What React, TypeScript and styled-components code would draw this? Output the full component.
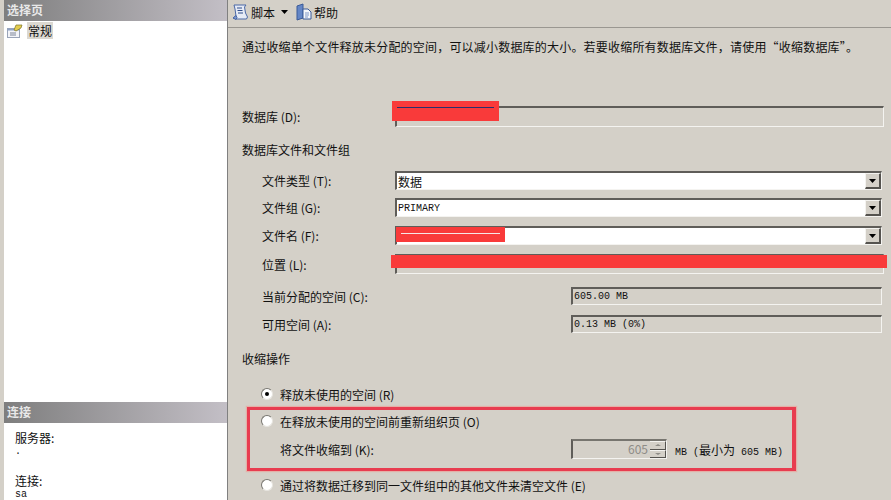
import React from "react";
import styled, { createGlobalStyle } from "styled-components";

const GlobalStyle = createGlobalStyle`
  html, body { margin: 0; padding: 0; background: #d4d0c8; }
  body { width: 891px; height: 500px; overflow: hidden; font-family: "Noto Sans CJK SC", "Liberation Sans", sans-serif; font-size: 12px; color: #111; }
`;

function ScriptIcon() {
  return (
    <svg width="18" height="18" viewBox="0 0 18 18">
      <path d="M3 2h12l-1.500 2 1 6 2 4-1 2H5l-3-1 3-2-1-7z" fill="#e6ebf6" stroke="#4a68a6" />
      <path d="M6 5h5M6.500 7.500h5M7 10h5" stroke="#2f4c8a" />
      <path d="M2 15l3-2.500 1 2-1 2z" fill="#7f9ad0" stroke="#4a68a6" />
    </svg>
  );
}

function HelpIcon() {
  return (
    <svg width="16" height="18" viewBox="0 0 16 18">
      <path d="M1 3l6-2v14l-6 2z" fill="#6486c6" stroke="#3a5a98" />
      <path d="M7 6h5l3 3v7H7z" fill="#f4f6fb" stroke="#3a5a98" />
      <path d="M9 10h4M9 12h4M9 14h3" stroke="#7f97c6" />
    </svg>
  );
}

function PageIcon() {
  return (
    <svg width="16" height="14" viewBox="0 0 16 14">
      <rect x="0.5" y="4.500" width="12" height="9" fill="#f3f4f8" stroke="#9aa4b8" />
      <rect x="0.5" y="4.500" width="12" height="2" fill="#8fa2c4" />
      <path d="M3 9h6M3 11h6" stroke="#7c8598" />
      <path d="M7 6l2-5h6l-1 3-5 3z" fill="#e3cc4e" stroke="#7d7326" strokeWidth="0.7" />
    </svg>
  );
}

function Caret() {
  return (
    <svg width="7" height="4" viewBox="0 0 7 4">
      <path d="M0 0h7L3.500 4z" fill="#000" />
    </svg>
  );
}

const Page = styled.div`
  position: relative;
  display: flex;
  width: 891px;
  height: 500px;
  overflow: hidden;
  background: #d4d0c8;
`;

const Sidebar = styled.aside`
  display: flex;
  flex-direction: column;
  width: 224px;
  box-sizing: border-box;
  margin-left: 4px;
  background: #fff;
  border-right: 1px solid #808080;
  flex: none;
`;

const PaneHeader = styled.div`
  height: 21px;
  line-height: 20px;
  padding-left: 3px;
  color: #e8e8e8;
  font-weight: 700;
  background: linear-gradient(90deg, #7e7e7e, #c3bfc6);
  flex: none;
`;

const PageList = styled.div`
  flex: 1;
  padding: 1px 0 0 3px;
`;

const PageItem = styled.div`
  display: flex;
  align-items: center;
  gap: 4px;
  height: 17px;
`;

const PageName = styled.span`
  padding: 0 1px;
  background: #dbd8d1;
  line-height: 17px;
`;

const ConnectionInfo = styled.div`
  height: 77px;
  box-sizing: border-box;
  padding: 7px 0 0 11px;
  flex: none;
`;

const InfoLabel = styled.div<{ $mt?: number }>`
  height: 16px;
  line-height: 16px;
  margin-top: ${(p) => p.$mt ?? 0}px;
`;

const InfoValue = styled.div`
  height: 11px;
  line-height: 11px;
  font-family: "Liberation Mono", monospace;
  font-size: 10px;
`;

const Main = styled.main`
  flex: 1;
  min-width: 0;
`;

const Toolbar = styled.div`
  display: flex;
  align-items: center;
  height: 28px;
  padding: 0 0 3px 3px;
  box-sizing: border-box;
  margin-bottom: 1px;
  border-bottom: 1px solid #9a9791;
`;

const ToolButton = styled.div`
  display: flex;
  align-items: center;
  gap: 2px;
`;

const ToolCaret = styled.span`
  display: flex;
  margin: 0 8px 0 6px;
`;

const Intro = styled.p`
  margin: 0;
  height: 36px;
  padding-left: 14px;
  line-height: 36px;
  letter-spacing: 0.2px;
  white-space: nowrap;
`;

const Row = styled.div<{ $mt: number; $h: number; $indent?: number }>`
  display: flex;
  align-items: center;
  height: ${(p) => p.$h}px;
  margin-top: ${(p) => p.$mt}px;
  padding-left: ${(p) => p.$indent ?? 14}px;
  white-space: nowrap;
`;

const Label = styled.span<{ $w: number }>`
  width: ${(p) => p.$w}px;
  flex: none;
`;

const Field = styled.div<{ $w: number; $off?: boolean; $mono?: boolean }>`
  display: flex;
  align-items: center;
  justify-content: space-between;
  box-sizing: border-box;
  width: ${(p) => p.$w}px;
  height: 100%;
  padding-left: 1px;
  background: ${(p) => (p.$off ? "#d4d0c8" : "#fff")};
  border-top: 2px solid #5f5d59;
  border-left: 2px solid #5f5d59;
  border-right: 1px solid #f4f3f0;
  border-bottom: 1px solid #f4f3f0;
  font-family: ${(p) => (p.$mono ? '"Liberation Mono", monospace' : "inherit")};
  font-size: ${(p) => (p.$mono ? "10px" : "12px")};
`;

const ComboArrow = styled.div`
  display: flex;
  align-items: center;
  justify-content: center;
  box-sizing: border-box;
  width: 16px;
  height: 100%;
  background: #d4d0c8;
  border-top: 1px solid #f4f3f0;
  border-left: 1px solid #f4f3f0;
  border-right: 2px solid #55534f;
  border-bottom: 2px solid #55534f;
`;

const Radio = styled.span<{ $on?: boolean }>`
  display: flex;
  align-items: center;
  justify-content: center;
  box-sizing: border-box;
  width: 12px;
  height: 12px;
  margin: 0 7px 0 0;
  border-radius: 50%;
  background: #fff;
  border: 1px solid #77756f;
  border-right-color: #e6e4df;
  border-bottom-color: #e6e4df;
  flex: none;
  &::after {
    content: "";
    width: 4px;
    height: 4px;
    border-radius: 50%;
    background: ${(p) => (p.$on ? "#000" : "transparent")};
  }
`;

const SizeInput = styled.div`
  display: flex;
  box-sizing: border-box;
  width: 96px;
  height: 20px;
  background: #d4d0c8;
  border-top: 2px solid #77756f;
  border-left: 2px solid #5f5d59;
  border-right: 1px solid #f4f3f0;
  border-bottom: 1px solid #f4f3f0;
`;

const SizeValue = styled.span`
  flex: 1;
  text-align: right;
  padding-right: 2px;
  line-height: 16px;
  color: #8e8c87;
`;

const Spinner = styled.div`
  display: flex;
  flex-direction: column;
  width: 16px;
  flex: none;
`;

const SpinButton = styled.div`
  flex: 1;
  display: flex;
  align-items: center;
  justify-content: center;
  background: #d4d0c8;
  border-top: 1px solid #f4f3f0;
  border-bottom: 1px solid #55534f;
  border-right: 1px solid #55534f;
`;

const SpinMark = styled.span<{ $up?: boolean }>`
  width: 0;
  height: 0;
  border-left: 3px solid transparent;
  border-right: 3px solid transparent;
  ${(p) => (p.$up ? "border-bottom: 2px solid #8e8c87;" : "border-top: 2px solid #8e8c87;")}
`;

const SizeNote = styled.span`
  margin-left: 8px;
  font-family: "Liberation Mono", "Noto Sans CJK SC", monospace;
  font-size: 10px;
  letter-spacing: 0;
`;

const CjkNote = styled.span`
  font-family: "Noto Sans CJK SC", sans-serif;
  font-size: 12px;
`;

/* redaction strokes and the red annotation sit on top of the screenshot */
const Redaction = styled.div<{ $x: number; $y: number; $w: number; $h: number }>`
  position: absolute;
  left: ${(p) => p.$x}px;
  top: ${(p) => p.$y}px;
  width: ${(p) => p.$w}px;
  height: ${(p) => p.$h}px;
  background: #f93a3a;
`;

const RedactLine = styled.div<{ $color: string }>`
  margin: 6px 5px 0;
  height: 1px;
  background: ${(p) => p.$color};
`;

const Highlight = styled.div`
  position: absolute;
  left: 247px;
  top: 407px;
  width: 549px;
  height: 64px;
  box-sizing: border-box;
  border: 3px solid #e83c50;
  border-right-width: 4px;
  box-shadow: 0 0 1px 1px rgba(240, 150, 140, 0.55);
`;

function ComboRow({ label, mt, value, mono }: { label: string; mt: number; value?: string; mono?: boolean }) {
  return (
    <Row $mt={mt} $h={19} $indent={34}>
      <Label $w={133}>{label}</Label>
      <Field $w={487} $mono={mono}>
        <span>{value}</span>
        <ComboArrow>
          <Caret />
        </ComboArrow>
      </Field>
    </Row>
  );
}

export default function App() {
  return (
    <Page>
      <GlobalStyle />
      <Sidebar>
        <PaneHeader>选择页</PaneHeader>
        <PageList>
          <PageItem>
            <PageIcon />
            <PageName>常规</PageName>
          </PageItem>
        </PageList>
        <PaneHeader>连接</PaneHeader>
        <ConnectionInfo>
          <InfoLabel>服务器:</InfoLabel>
          <InfoValue>.</InfoValue>
          <InfoLabel $mt={16}>连接:</InfoLabel>
          <InfoValue>sa</InfoValue>
        </ConnectionInfo>
      </Sidebar>
      <Main>
        <Toolbar>
          <ToolButton>
            <ScriptIcon />
            脚本
          </ToolButton>
          <ToolCaret>
            <Caret />
          </ToolCaret>
          <ToolButton>
            <HelpIcon />
            帮助
          </ToolButton>
        </Toolbar>
        <Intro>{"通过收缩单个文件释放未分配的空间\uFF0C可以减小数据库的大小。若要收缩所有数据库文件\uFF0C请使用\u201C收缩数据库\u201D。"}</Intro>

        <Row $mt={41} $h={21}>
          <Label $w={153}>数据库 (D):</Label>
          <Field $w={489} $off />
        </Row>
        <Row $mt={12} $h={20}>数据库文件和文件组</Row>
        <ComboRow mt={12} label="文件类型 (T):" value="数据" />
        <ComboRow mt={8} label="文件组 (G):" value="PRIMARY" mono />
        <ComboRow mt={9} label="文件名 (F):" />
        <Row $mt={9} $h={20} $indent={34}>
          <Label $w={133}>位置 (L):</Label>
          <Field $w={489} $off />
        </Row>
        <Row $mt={13} $h={18} $indent={34}>
          <Label $w={309}>当前分配的空间 (C):</Label>
          <Field $w={311} $off $mono>605.00 MB</Field>
        </Row>
        <Row $mt={10} $h={18} $indent={34}>
          <Label $w={309}>可用空间 (A):</Label>
          <Field $w={311} $off $mono>0.13 MB (0%)</Field>
        </Row>
        <Row $mt={15} $h={20}>收缩操作</Row>
        <Row $mt={16} $h={20} $indent={33}>
          <Radio $on />
          释放未使用的空间 (R)
        </Row>
        <Row $mt={7} $h={20} $indent={33}>
          <Radio />
          在释放未使用的空间前重新组织页 (O)
        </Row>
        <Row $mt={8} $h={20} $indent={52}>
          <Label $w={291}>将文件收缩到 (K):</Label>
          <SizeInput>
            <SizeValue>605</SizeValue>
            <Spinner>
              <SpinButton>
                <SpinMark $up />
              </SpinButton>
              <SpinButton>
                <SpinMark />
              </SpinButton>
            </Spinner>
          </SizeInput>
          <SizeNote>
            MB (<CjkNote>最小为</CjkNote> 605 MB)
          </SizeNote>
        </Row>
        <Row $mt={16} $h={20} $indent={33}>
          <Radio />
          通过将数据迁移到同一文件组中的其他文件来清空文件 (E)
        </Row>
      </Main>

      <Redaction $x={392} $y={101} $w={107} $h={20}>
        <RedactLine $color="#2b2f6b" />
      </Redaction>
      <Redaction $x={396} $y={227} $w={109} $h={15}>
        <RedactLine $color="#f6e6e6" />
      </Redaction>
      <Redaction $x={391} $y={255} $w={496} $h={13} />
      <Highlight />
    </Page>
  );
}
